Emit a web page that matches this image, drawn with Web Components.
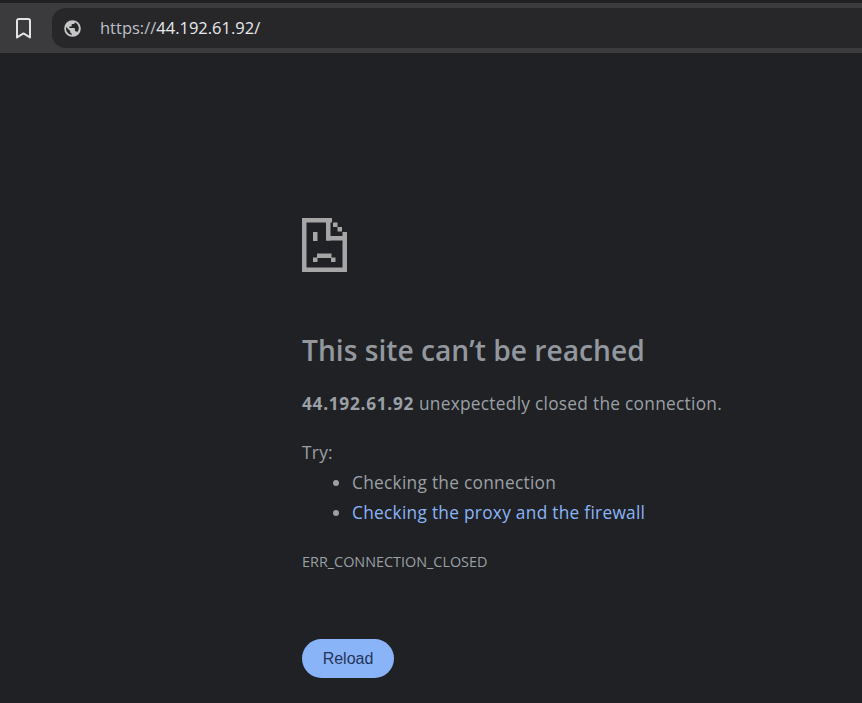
<!DOCTYPE html>
<html>
<head>
<meta charset="utf-8">
<title>44.192.61.92</title>
<style>
  html, body { margin: 0; height: 100%; background: #202124; overflow: hidden; }
  body { display: flex; flex-direction: column; font-family: "Open Sans", "Noto Sans", sans-serif; }
  error-page a { color: #8ab4f8; text-decoration: none; }
</style>
</head>
<body>
<browser-toolbar url="https://44.192.61.92/"></browser-toolbar>
<error-page host="44.192.61.92" code="ERR_CONNECTION_CLOSED">
  <li>Checking the connection</li>
  <li><a href="#">Checking the proxy and the firewall</a></li>
</error-page>
<script>
class BrowserToolbar extends HTMLElement {
    constructor() {
        super();
        this.attachShadow({ mode: 'open' });
    }

    connectedCallback() {
        const url = this.getAttribute('url');
        const scheme = url.slice(0, 8);
        const rest = url.slice(8);
        this.shadowRoot.innerHTML = `
            <style>
                :host { display: block; flex: none; background: #202124; padding-top: 3px; }
                .bar {
                    height: 50px;
                    box-sizing: border-box;
                    padding: 5px 0 5px 16px;
                    background: #3b3b3e;
                    display: flex;
                    align-items: center;
                    gap: 21px;
                }
                .bar > svg { flex: none; }
                .field {
                    flex: 1;
                    height: 40px;
                    background: #27272a;
                    border-radius: 14px 0 0 14px;
                    display: flex;
                    align-items: center;
                    padding-left: 11px;
                    gap: 18px;
                    font-size: 16.5px;
                    color: #e8eaed;
                }
                .url { padding-bottom: 2px; }
                .scheme { color: #bdc1c6; }
            </style>
            <div class="bar">
                <svg width="15" height="21" viewBox="0 0 15 21">
                    <path d="M1 2.8a1.8 1.8 0 0 1 1.8-1.8h9.4a1.8 1.8 0 0 1 1.8 1.8v16.6l-6.5-4-6.5 4z" fill="none" stroke="#e3e3e3" stroke-width="2" stroke-linejoin="round"/>
                </svg>
                <div class="field">
                    <svg width="19" height="19" viewBox="0 0 24 24">
                        <path fill="#c4c7c5" d="M12 1.5a10.5 10.5 0 1 0 0 21 10.5 10.5 0 0 0 0-21zM3.8 12c0-.7.1-1.3.2-1.9l5 5v1.1c0 1.1.9 2 2 2v1.9A8.2 8.2 0 0 1 3.8 12zm14.2 4.8c-.3-.8-1-1.4-1.9-1.4h-1v-3c0-.6-.4-1-1-1H8v-2h2c.6 0 1-.4 1-1v-2h2c1.1 0 2-.9 2-2v-.4a8.2 8.2 0 0 1 3 12.8z"/>
                    </svg>
                    <span class="url"><span class="scheme">${scheme}</span>${rest}</span>
                </div>
            </div>
        `;
    }
}

class SadFile extends HTMLElement {
    constructor() {
        super();
        this.attachShadow({ mode: 'open' });
    }

    connectedCallback() {
        this.shadowRoot.innerHTML = `
            <style>
                :host { display: block; width: 45px; height: 54px; }
                svg { display: block; }
            </style>
            <svg width="45" height="54" viewBox="0 0 45 54" fill="#a6a6a6">
                <rect x="0" y="0" width="30" height="4.5"/>
                <rect x="0" y="0" width="4.5" height="54"/>
                <rect x="0" y="49.5" width="45" height="4.5"/>
                <rect x="40.5" y="14" width="4.5" height="40"/>
                <rect x="24" y="0" width="4.5" height="22.5"/>
                <rect x="24" y="18" width="21" height="4.5"/>
                <rect x="31" y="4.5" width="4.5" height="4.5"/>
                <rect x="35.5" y="9" width="4.5" height="4.5"/>
                <rect x="11" y="14" width="4.5" height="9"/>
                <rect x="11" y="39.5" width="4.5" height="4.5"/>
                <rect x="15" y="35.5" width="14.5" height="4.5"/>
                <rect x="29" y="39.5" width="4.5" height="4.5"/>
            </svg>
        `;
    }
}

class ErrorPage extends HTMLElement {
    constructor() {
        super();
        this.attachShadow({ mode: 'open' });
    }

    connectedCallback() {
        const host = this.getAttribute('host');
        const code = this.getAttribute('code');
        this.shadowRoot.innerHTML = `
            <style>
                :host {
                    display: block;
                    flex: 1;
                    box-sizing: border-box;
                    padding: 165px 0 0 302px;
                    color: #9aa0a6;
                    font-size: 17.3px;
                    letter-spacing: .28px;
                }
                h1 {
                    margin: 58px 0 0;
                    font-size: 28.2px;
                    line-height: 40px;
                    font-weight: 600;
                    letter-spacing: 0;
                    color: #92989e;
                }
                p { margin: 0; }
                .desc { margin-top: 22px; line-height: 24px; }
                .desc b { font-weight: 700; letter-spacing: .7px; }
                .try { margin-top: 25px; line-height: 24px; }
                ::slotted(li) { line-height: 30px; }
                ul { margin: 3px 0 0; padding: 0 0 0 50px; }
                .code { margin-top: 24px; font-size: 14.4px; line-height: 20px; letter-spacing: 0; }
                button {
                    display: block;
                    margin-top: 67px;
                    width: 92px;
                    height: 39px;
                    border: 0;
                    border-radius: 20px;
                    background: #8ab4f8;
                    color: #24345a;
                    font: 16px "Liberation Sans", Arial, sans-serif;
                }
            </style>
            <sad-file></sad-file>
            <h1>This site can’t be reached</h1>
            <p class="desc"><b>${host}</b> unexpectedly closed the connection.</p>
            <p class="try">Try:</p>
            <ul><slot></slot></ul>
            <p class="code">${code}</p>
            <button>Reload</button>
        `;
    }
}

customElements.define('browser-toolbar', BrowserToolbar);
customElements.define('sad-file', SadFile);
customElements.define('error-page', ErrorPage);
</script>
</body>
</html>
